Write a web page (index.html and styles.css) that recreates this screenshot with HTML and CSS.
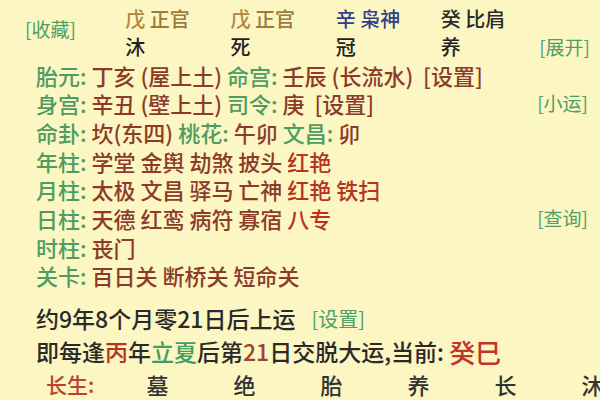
FILE: index.html
```html
<!DOCTYPE html>
<html lang="zh-CN">
<head>
    <meta charset="UTF-8">
    <meta name="viewport" content="width=device-width, initial-scale=1.0">
    <title>八字排盘</title>
    <link rel="stylesheet" href="styles.css">
</head>
<body>
    <div class="pillars">
        <div class="fav"><span class="link">[收藏]</span></div>
        <div class="pillar">
            <div class="gan"><span class="stem">戊</span> 正官</div>
            <div class="stage">沐</div>
        </div>
        <div class="pillar">
            <div class="gan"><span class="stem">戊</span> 正官</div>
            <div class="stage">死</div>
        </div>
        <div class="pillar">
            <div class="gan blue">辛 枭神</div>
            <div class="stage">冠</div>
        </div>
        <div class="pillar last">
            <div class="gan dark">癸 比肩</div>
            <div class="stage">养</div>
        </div>
        <div class="more"><span class="link">[展开]</span></div>
    </div>

    <div class="line"><span class="label">胎元:</span>&nbsp;<span class="val">丁亥 (屋上土)</span>&nbsp;<span class="label">命宫:</span>&nbsp;<span class="val">壬辰 (长流水) &nbsp;[设置]</span></div>
    <div class="line"><span class="label">身宫:</span>&nbsp;<span class="val">辛丑 (壁上土)</span>&nbsp;<span class="label">司令:</span>&nbsp;<span class="val">庚 &nbsp;[设置]</span><span class="side link">[小运]</span></div>
    <div class="line"><span class="label">命卦:</span>&nbsp;<span class="val">坎(东四)</span>&nbsp;<span class="label">桃花:</span>&nbsp;<span class="val">午卯</span>&nbsp;<span class="label">文昌:</span>&nbsp;<span class="val">卯</span></div>
    <div class="line"><span class="label">年柱:</span>&nbsp;<span class="val">学堂 金舆 劫煞 披头 <span class="red">红艳</span></span></div>
    <div class="line"><span class="label">月柱:</span>&nbsp;<span class="val">太极 文昌 驿马 亡神 <span class="red">红艳 铁扫</span></span></div>
    <div class="line"><span class="label">日柱:</span>&nbsp;<span class="val">天德 红鸾 病符 寡宿 <span class="red">八专</span></span><span class="side link">[查询]</span></div>
    <div class="line"><span class="label">时柱:</span>&nbsp;<span class="val">丧门</span></div>
    <div class="line"><span class="label">关卡:</span>&nbsp;<span class="val">百日关 断桥关 短命关</span></div>

    <div class="luck">
        <div class="luck-line">约9年8个月零21日后上运<span class="link setup">[设置]</span></div>
        <div class="luck-line">即每逢<span class="red">丙</span>年<span class="green">立夏</span>后第<span class="num">21</span>日交脱大运,当前: <span class="current">癸巳</span></div>
    </div>

    <div class="stages">
        <div class="stages-label">长生:</div>
        <div class="cell">墓</div>
        <div class="cell">绝</div>
        <div class="cell">胎</div>
        <div class="cell">养</div>
        <div class="cell">长</div>
        <div class="cell">沐</div>
    </div>
</body>
</html>
```

FILE: styles.css
```css
body { margin: 0; background: #fbf6c2; font-family: "Noto Sans CJK SC", "Noto Sans", sans-serif; font-size: 22px; font-weight: 500; color: #2a2a2a; overflow: hidden; }
.link { color: #4f9e68; font-size: 19px; font-weight: 400; }
.label { color: #4e9c62; }
.val { color: #8c3b2b; }
.red { color: #b8321f; }
.green { color: #3f9e60; }
.num { color: #a0432e; }

.pillars { display: flex; padding-top: 5px; font-size: 20px; }
.fav { width: 126px; box-sizing: border-box; padding-left: 25px; padding-bottom: 8px; display: flex; align-items: center; }
.pillar { width: 106px; }
.pillar.last { width: 99px; }
.gan { height: 28px; line-height: 28px; color: #9c7a3c; }
.stem { color: #b3843f; }
.blue { color: #2e3f8c; }
.dark { color: #2a2a2a; }
.stage { height: 27.5px; line-height: 27.5px; color: #222; }
.more { flex: 1; display: flex; align-items: flex-end; justify-content: flex-end; padding-right: 10px; line-height: 27.5px; white-space: nowrap; }

.line { display: flex; align-items: center; height: 28.7px; line-height: 28.7px; padding-left: 36px; padding-right: 12px; white-space: pre; }
.side { margin-left: auto; }

.luck { margin-top: 12px; padding-left: 36px; font-size: 23px; }
.luck-line { height: 33px; line-height: 33px; display: flex; align-items: center; white-space: pre; }
.setup { font-size: 20px; margin-left: 16px; }
.current { color: #c2352a; font-size: 26px; }

.stages { display: grid; grid-template-columns: 114px repeat(6, 87px); height: 33px; line-height: 33px; font-size: 22px; }
.stages-label { color: #c0402c; padding-left: 46px; font-size: 21px; }
.cell { text-align: center; color: #333; }
```
